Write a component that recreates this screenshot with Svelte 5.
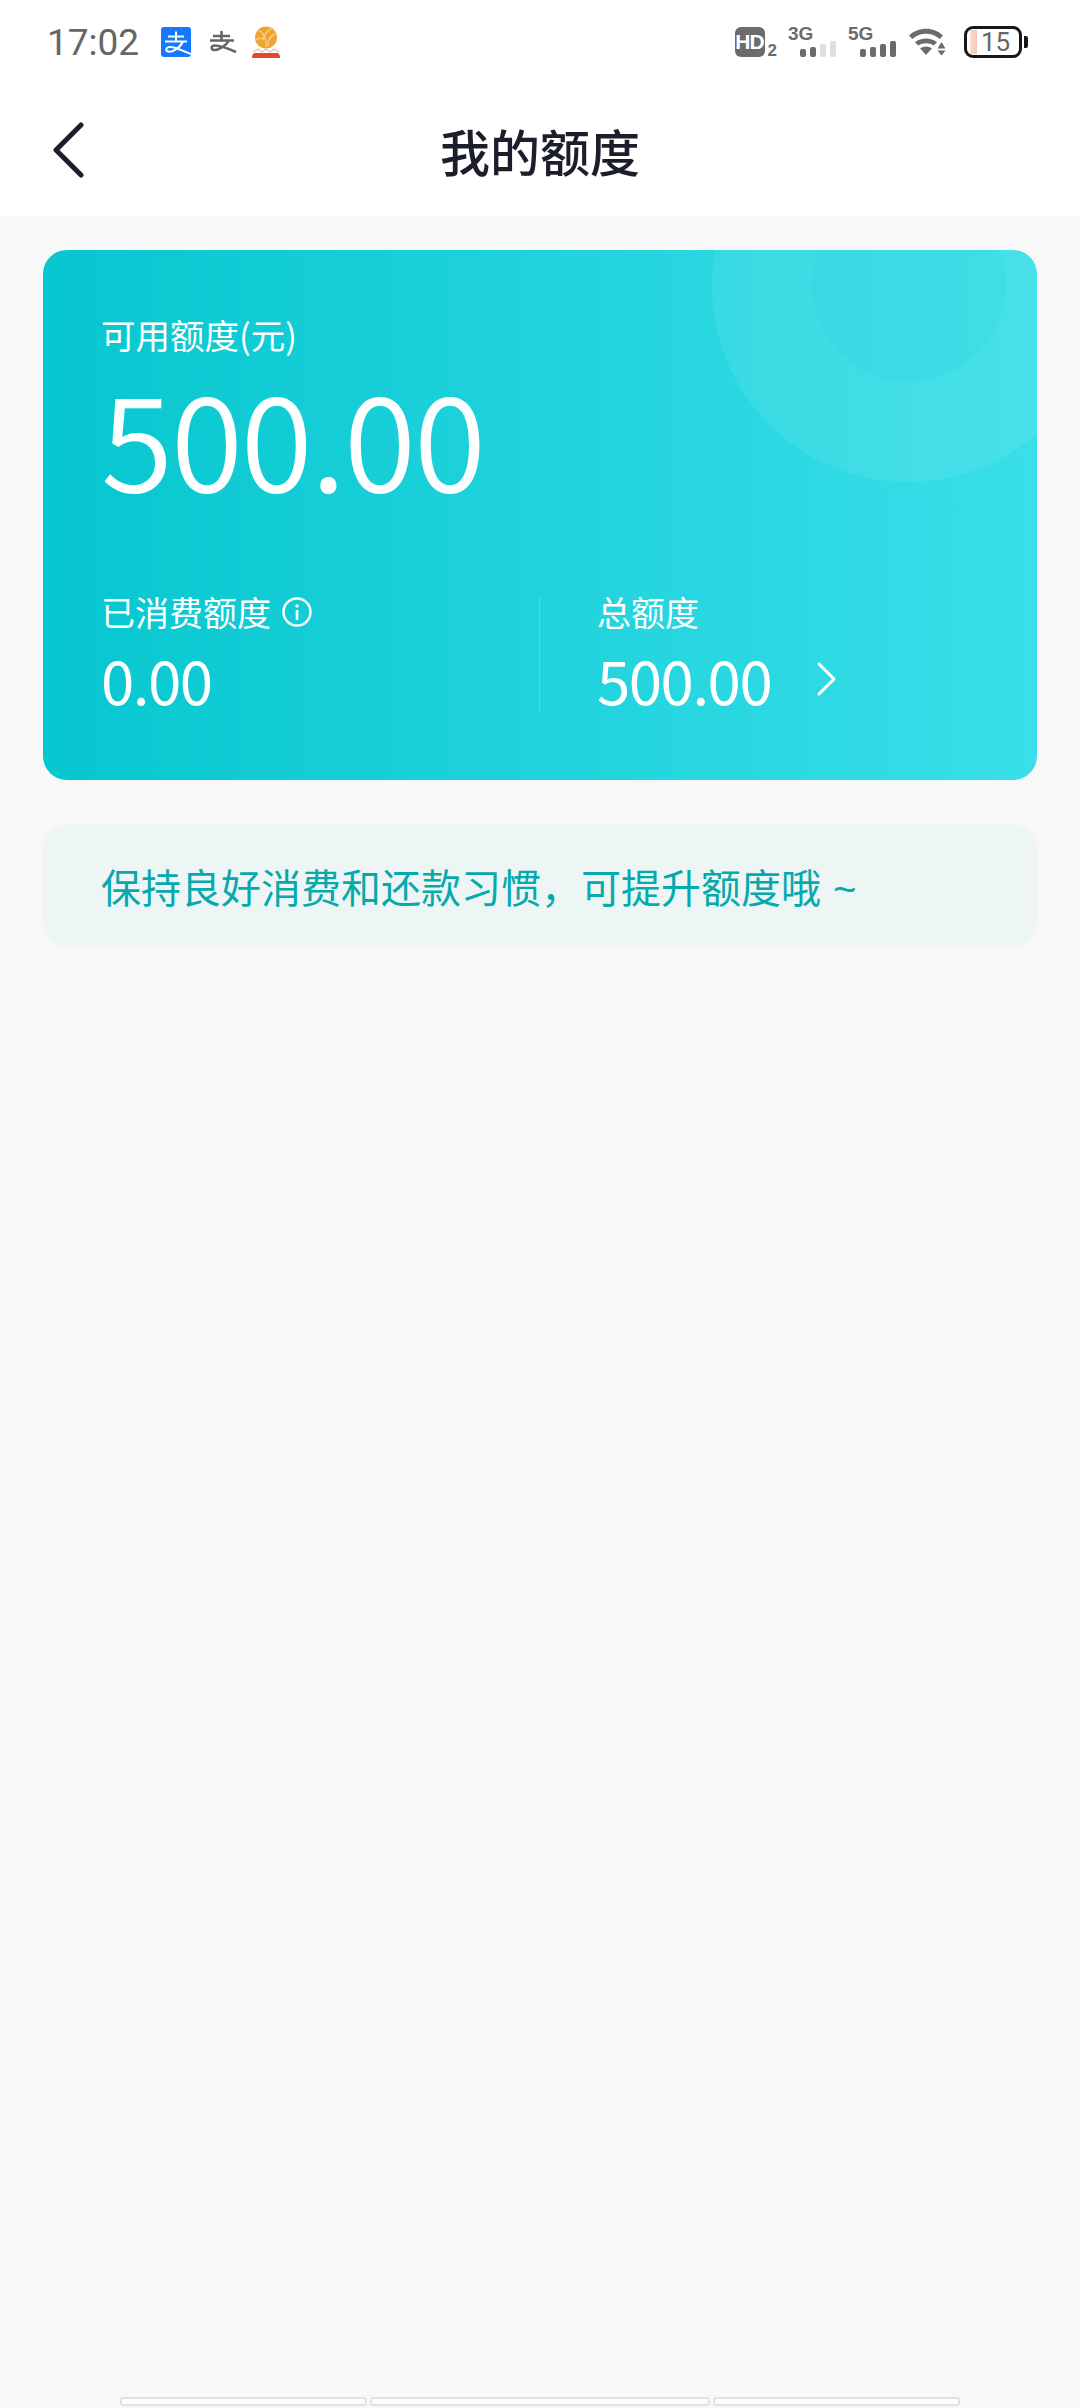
<script>
	const sims = [
		{ label: '3G', lit: 2 },
		{ label: '5G', lit: 4 }
	];
	const barHeights = [8, 10, 13, 16];
</script>

<div class="page">
	<div class="top">
		<div class="status">
			<div class="status-left">
				<span class="time">17:02</span>
				<svg class="alipay" width="30" height="30" viewBox="0 0 30 30">
					<rect width="30" height="30" rx="3" fill="#1677ff" />
					<path d="M7 9.500h16M15 4.500v9M4 14.500h22M22 14.500C19 21 11 25.500 7 24.500c-3-.8-2-4.500 2-4.500 6 0 13 4 21 7" fill="none" stroke="#fff" stroke-width="2" />
				</svg>
				<svg class="alipay-grey" width="30" height="24" viewBox="0 0 30 24">
					<path d="M5 6h17M13.500 1v9M2 10.500h24M21 10.500C18 16 10 20.500 6 20c-3.500-.5-3-4.500 1-4.500 6 0 13 3 21 6.500" fill="none" stroke="#666" stroke-width="2.600" />
				</svg>
				<svg class="ball" width="30" height="32" viewBox="0 0 30 32">
					<circle cx="15" cy="11.500" r="11" fill="#eea52f" />
					<path d="M7 4c5 2 9 8 8 17M21 2c-5 3-9 8-9 12M25 8c-5 1-8 5-8 12M4 14c3-2 6-2 9-1" fill="none" stroke="#f8d08a" stroke-width="1.300" />
					<path d="M1 32c0-3 1-5 3-5h22c2 0 3 2 3 5z" fill="#e2492c" />
					<path d="M2 26l5-3 4 3 4-3 4 3 4-3 5 3" fill="none" stroke="#f3b9a8" stroke-width="1.200" />
				</svg>
			</div>
			<div class="status-right">
				<span class="hd"><span class="hd-box">HD</span><span class="hd-sub">2</span></span>
				{#each sims as sim}
					<span class="sim">
						<span class="sim-label">{sim.label}</span>
						<span class="bars">
							{#each barHeights as h, i}
								<i class:off={i >= sim.lit} style="height: {h}px"></i>
							{/each}
						</span>
					</span>
				{/each}
				<svg class="wifi" width="38" height="28" viewBox="0 0 38 28">
					<path d="M1 7.500C10-1.500 26-1.500 35 7.500l-3.200 3.600C23.500 4 12.500 4 4.200 11.100z" fill="#6b6b6b" />
					<path d="M7 14.200c6.500-5 15.500-5 22 0l-3.200 3.400c-4.800-3.200-10.800-3.200-15.600 0z" fill="#6b6b6b" />
					<path d="M12 20.200c4-2.200 8-2.200 12 0L18 27z" fill="#6b6b6b" />
					<path d="M33.500 14l4 6.500h-8zM29.500 22.500h8l-4 5z" fill="#6b6b6b" />
				</svg>
				<span class="battery">
					<span class="battery-body"><i></i><b>15</b></span>
					<span class="battery-nub"></span>
				</span>
			</div>
		</div>
		<div class="nav">
			<svg class="back" width="32" height="56" viewBox="0 0 32 56">
				<path d="M28 3 3 28l25 25" fill="none" stroke="#1c1f2b" stroke-width="5" stroke-linecap="round" stroke-linejoin="round" />
			</svg>
			<h1>我的额度</h1>
		</div>
	</div>

	<div class="content">
		<section class="card">
			<span class="ring"></span>
			<span class="core"></span>
			<div class="label main-label">可用额度(元)</div>
			<div class="available">500.00</div>
			<div class="stats">
				<div>
					<div class="label with-icon">
						已消费额度
						<svg width="32" height="32" viewBox="0 0 32 32">
							<circle cx="16" cy="16" r="13.500" fill="none" stroke="#fff" stroke-width="2.400" />
							<circle cx="16" cy="10" r="1.700" fill="#fff" />
							<path d="M16 14v10" stroke="#fff" stroke-width="2.600" />
						</svg>
					</div>
					<div class="amount">0.00</div>
				</div>
				<span class="divider"></span>
				<div class="total">
					<div class="label">总额度</div>
					<div class="amount">
						500.00
						<svg width="22" height="36" viewBox="0 0 22 36">
							<path d="M3 3l15 15L3 33" fill="none" stroke="#fff" stroke-width="3" stroke-linecap="round" stroke-linejoin="round" />
						</svg>
					</div>
				</div>
			</div>
		</section>

		<p class="tip">保持良好消费和还款习惯，可提升额度哦 <span class="tilde">~</span></p>
	</div>

	<div class="handle">
		<span class="side"></span>
		<span class="mid"></span>
		<span class="side"></span>
	</div>
</div>

<style>
	:global(body) {
		margin: 0;
		background: #f8f8f8;
	}

	.page {
		display: flex;
		flex-direction: column;
		height: 2408px;
		overflow: hidden;
		font-family: 'Noto Sans CJK SC', 'Noto Sans', sans-serif;
	}

	.top {
		background: #fff;
	}

	.status {
		display: flex;
		justify-content: space-between;
		align-items: center;
		height: 84px;
		padding: 0 52px 0 47px;
	}

	.status-left,
	.status-right {
		display: flex;
		align-items: center;
	}

	.time {
		font-family: Roboto, sans-serif;
		font-size: 37px;
		color: #666;
		margin-right: 22px;
	}

	.alipay {
		display: block;
		margin-right: 17px;
	}

	.alipay-grey {
		display: block;
		margin-right: 13px;
	}

	.ball {
		display: block;
	}

	.hd {
		display: flex;
		align-items: flex-end;
		margin-right: 11px;
	}

	.hd-box {
		width: 30px;
		height: 30px;
		border-radius: 6px;
		background: #6b6b6b;
		color: #fff;
		font-family: 'Liberation Sans', sans-serif;
		font-size: 21px;
		font-weight: 700;
		line-height: 30px;
		text-align: center;
		letter-spacing: -1px;
	}

	.hd-sub {
		font-family: 'Liberation Sans', sans-serif;
		font-size: 17px;
		font-weight: 700;
		line-height: 13px;
		color: #6b6b6b;
		margin-left: 3px;
	}

	.sim {
		position: relative;
		display: block;
		width: 48px;
		height: 30px;
		margin-right: 12px;
	}

	.sim-label {
		position: absolute;
		left: 0;
		top: -3px;
		font-family: 'Liberation Sans', sans-serif;
		font-size: 19px;
		font-weight: 700;
		line-height: 20px;
		color: #6b6b6b;
	}

	.bars {
		position: absolute;
		right: 0;
		bottom: 0;
		display: flex;
		align-items: flex-end;
		gap: 4px;
	}

	.bars i {
		display: block;
		width: 6px;
		border-radius: 2px;
		background: #6b6b6b;
	}

	.bars i.off {
		background: #dedede;
	}

	.wifi {
		display: block;
		margin: 0 18px 0 0;
	}

	.battery {
		display: flex;
		align-items: center;
	}

	.battery-body {
		position: relative;
		display: block;
		width: 52px;
		height: 26px;
		border: 3.500px solid #15181c;
		border-radius: 9px;
	}

	.battery-body i {
		position: absolute;
		left: 3px;
		top: 1px;
		bottom: 1px;
		width: 7px;
		background: linear-gradient(to right, #fbdcc8, #f7c5bd);
	}

	.battery-body b {
		position: absolute;
		left: 14px;
		top: 0;
		font-family: Roboto, sans-serif;
		font-size: 26px;
		font-weight: 400;
		line-height: 26px;
		color: #666;
	}

	.battery-nub {
		display: block;
		width: 4px;
		height: 12px;
		margin-left: 2px;
		border-radius: 0 2px 2px 0;
		background: #15181c;
	}

	.nav {
		position: relative;
		display: flex;
		align-items: center;
		justify-content: center;
		height: 132px;
	}

	.back {
		position: absolute;
		left: 53px;
		top: 38px;
	}

	h1 {
		margin: 0;
		font-size: 50px;
		font-weight: 500;
		line-height: 70px;
		color: #1c1f2b;
	}

	.content {
		flex: 1;
		padding: 34px 43px 0;
	}

	.card {
		position: relative;
		overflow: hidden;
		padding: 62px 58px 66px;
		border-radius: 24px;
		background: linear-gradient(to right, #06c6cf, #39dfe9);
		color: #fff;
	}

	.ring,
	.core {
		position: absolute;
		border-radius: 50%;
	}

	.ring {
		left: 669px;
		top: -160px;
		width: 392px;
		height: 392px;
		background: rgba(255, 255, 255, 0.08);
	}

	.core {
		left: 769px;
		top: -62px;
		width: 194px;
		height: 194px;
		background: rgba(0, 190, 205, 0.08);
	}

	.label {
		position: relative;
		font-size: 34px;
		line-height: 44px;
	}

	.main-label {
		font-size: 34.500px;
	}

	.with-icon {
		display: flex;
		align-items: center;
		gap: 10px;
	}

	.available {
		position: relative;
		margin-top: 14px;
		font-size: 131px;
		font-weight: 350;
		line-height: 130px;
		letter-spacing: -2px;
	}

	.stats {
		position: relative;
		display: grid;
		grid-template-columns: 438px 1px 1fr;
		margin-top: 90px;
	}

	.divider {
		height: 117px;
		margin-top: 6px;
		background: rgba(255, 255, 255, 0.22);
	}

	.total {
		padding-left: 57px;
	}

	.amount {
		display: flex;
		align-items: center;
		gap: 45px;
		margin-top: 10px;
		font-size: 60px;
		line-height: 70px;
		letter-spacing: -1.500px;
	}

	.tip {
		margin: 44px 0 0;
		padding: 0 58px;
		border-radius: 24px;
		background: #eef6f5;
		color: #06a9ad;
		font-size: 40px;
		line-height: 124px;
	}

	.tilde {
		margin-left: 3px;
		font-family: 'Liberation Sans', sans-serif;
		line-height: 1;
	}

	.handle {
		display: flex;
		justify-content: center;
		gap: 3px;
		height: 11px;
	}

	.handle span {
		box-sizing: border-box;
		height: 9px;
		border: 2px solid #e2e2e2;
		background: #fdfdfd;
		border-radius: 3px;
	}

	.side {
		width: 247px;
	}

	.mid {
		width: 340px;
	}
</style>
